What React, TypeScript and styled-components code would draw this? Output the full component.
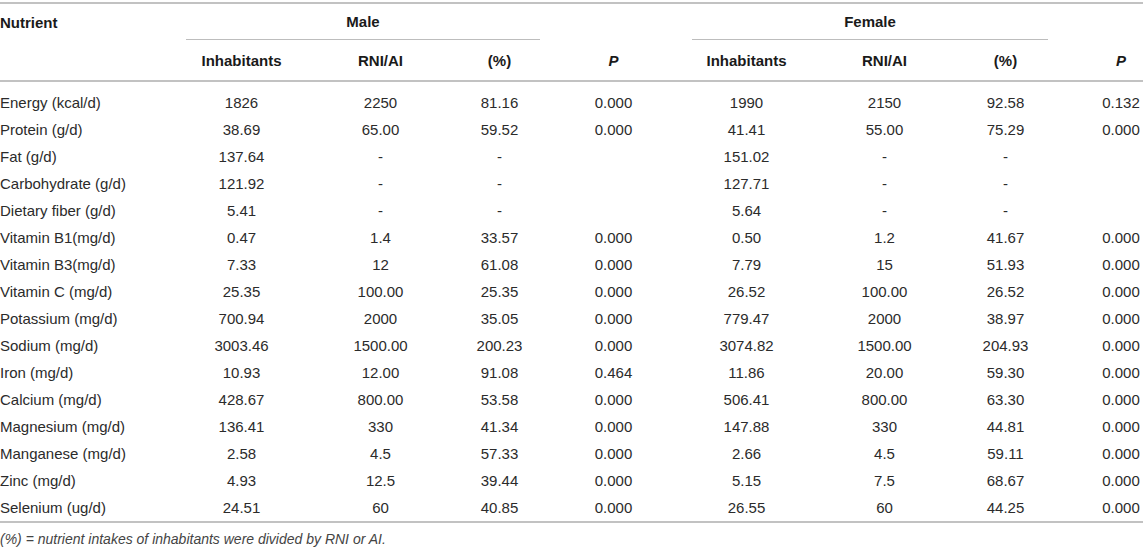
import React from 'react';
import styled, {createGlobalStyle} from 'styled-components';

const GlobalStyle = createGlobalStyle`
  body {
    margin: 0;
    background: #ffffff;
    font-family: "Liberation Sans", Arial, sans-serif;
    color: #2b2b2b;
  }
`

const COLS = '172px 139px 139px 99px 129px 137px 139px 103px 86px';

const Wrapper = styled.section`
  width: 1143px;
  padding-top: 2px;
`

const Head = styled.div`
  border-top: 2px solid #c2c2c2;
  border-bottom: 2px solid #c2c2c2;
`

const Row = styled.div<{ $height: number }>`
  display: grid;
  grid-template-columns: ${COLS};
  height: ${p => p.$height}px;
  align-items: center;
  font-size: 15px;
`

const HeadCell = styled.div<{ $left?: boolean; $last?: boolean; $italic?: boolean }>`
  font-weight: bold;
  color: #1a1a1a;
  text-align: ${p => (p.$left ? 'left' : 'center')};
  padding-left: ${p => (p.$last ? '42px' : '0')};
  font-style: ${p => (p.$italic ? 'italic' : 'normal')};
`

const GroupCell = styled.div`
  grid-column: span 3;
  align-self: stretch;
  display: flex;
  align-items: center;
  justify-content: center;
  margin: 0 9px 0 14px;
  border-bottom: 1px solid #bdbdbd;
  font-weight: bold;
  color: #1a1a1a;
`

const Body = styled.div`
  padding-top: 7px;
  border-bottom: 2px solid #c2c2c2;
`

const Cell = styled.div<{ $left?: boolean; $last?: boolean }>`
  text-align: ${p => (p.$left ? 'left' : 'center')};
  padding-left: ${p => (p.$last ? '42px' : '0')};
  white-space: nowrap;
`

const Note = styled.p`
  margin: 6px 0 0;
  font-size: 14px;
  line-height: 20px;
  font-style: italic;
  color: #444;
`

type Line = [string, string, string, string, string, string, string, string, string];

const rows: Line[] = [
    ['Energy (kcal/d)', '1826', '2250', '81.16', '0.000', '1990', '2150', '92.58', '0.132'],
    ['Protein (g/d)', '38.69', '65.00', '59.52', '0.000', '41.41', '55.00', '75.29', '0.000'],
    ['Fat (g/d)', '137.64', '-', '-', '', '151.02', '-', '-', ''],
    ['Carbohydrate (g/d)', '121.92', '-', '-', '', '127.71', '-', '-', ''],
    ['Dietary fiber (g/d)', '5.41', '-', '-', '', '5.64', '-', '-', ''],
    ['Vitamin B1(mg/d)', '0.47', '1.4', '33.57', '0.000', '0.50', '1.2', '41.67', '0.000'],
    ['Vitamin B3(mg/d)', '7.33', '12', '61.08', '0.000', '7.79', '15', '51.93', '0.000'],
    ['Vitamin C (mg/d)', '25.35', '100.00', '25.35', '0.000', '26.52', '100.00', '26.52', '0.000'],
    ['Potassium (mg/d)', '700.94', '2000', '35.05', '0.000', '779.47', '2000', '38.97', '0.000'],
    ['Sodium (mg/d)', '3003.46', '1500.00', '200.23', '0.000', '3074.82', '1500.00', '204.93', '0.000'],
    ['Iron (mg/d)', '10.93', '12.00', '91.08', '0.464', '11.86', '20.00', '59.30', '0.000'],
    ['Calcium (mg/d)', '428.67', '800.00', '53.58', '0.000', '506.41', '800.00', '63.30', '0.000'],
    ['Magnesium (mg/d)', '136.41', '330', '41.34', '0.000', '147.88', '330', '44.81', '0.000'],
    ['Manganese (mg/d)', '2.58', '4.5', '57.33', '0.000', '2.66', '4.5', '59.11', '0.000'],
    ['Zinc (mg/d)', '4.93', '12.5', '39.44', '0.000', '5.15', '7.5', '68.67', '0.000'],
    ['Selenium (ug/d)', '24.51', '60', '40.85', '0.000', '26.55', '60', '44.25', '0.000'],
];

const subHeads = ['Inhabitants', 'RNI/AI', '(%)'];

const App = () => {
    return (
        <>
            <GlobalStyle/>
            <Wrapper>
                <Head>
                    <Row $height={36}>
                        <HeadCell $left>Nutrient</HeadCell>
                        <GroupCell>Male</GroupCell>
                        <div/>
                        <GroupCell>Female</GroupCell>
                        <div/>
                    </Row>
                    <Row $height={40}>
                        <div/>
                        {subHeads.map(h => <HeadCell key={'m' + h}>{h}</HeadCell>)}
                        <HeadCell $italic>P</HeadCell>
                        {subHeads.map(h => <HeadCell key={'f' + h}>{h}</HeadCell>)}
                        <HeadCell $italic $last>P</HeadCell>
                    </Row>
                </Head>
                <Body>
                    {rows.map(r => (
                        <Row $height={27} key={r[0]}>
                            {r.map((v, i) => (
                                <Cell key={i} $left={i === 0} $last={i === 8}>{v}</Cell>
                            ))}
                        </Row>
                    ))}
                </Body>
                <Note>(%) = nutrient intakes of inhabitants were divided by RNI or AI.</Note>
            </Wrapper>
        </>
    );
};

export default App;
